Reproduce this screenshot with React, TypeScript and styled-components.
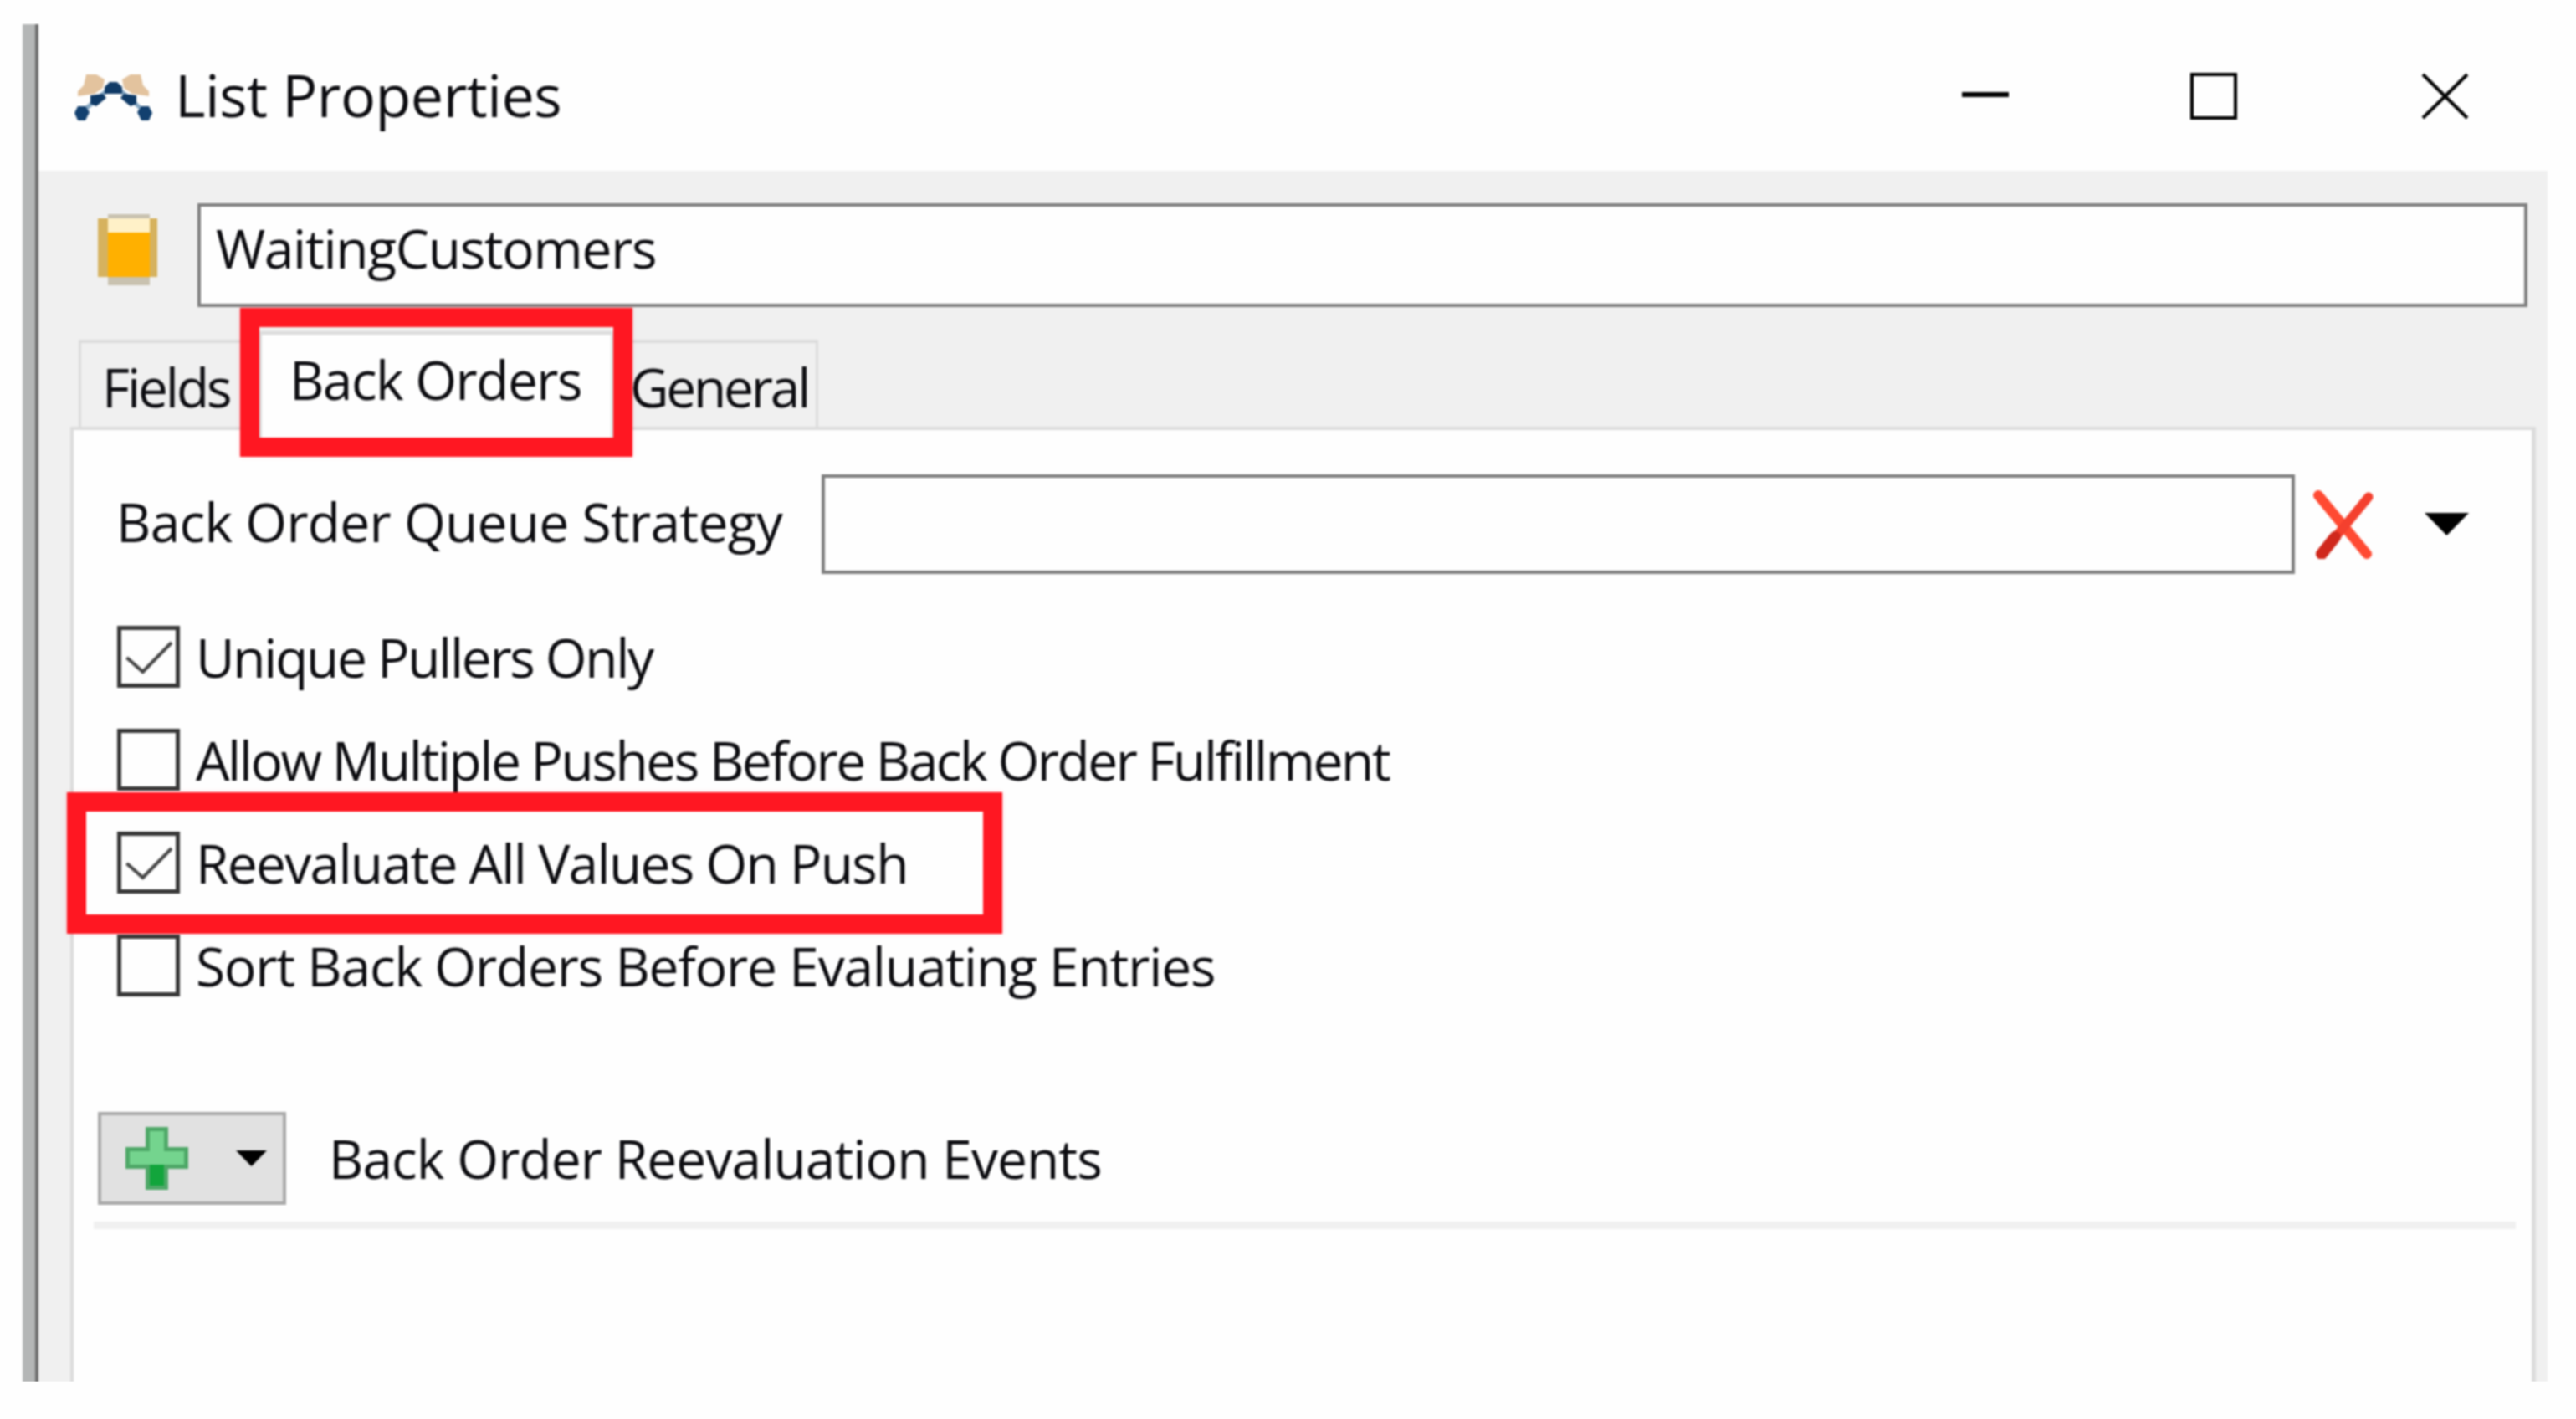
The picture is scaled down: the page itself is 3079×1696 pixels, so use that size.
import React from 'react';
import styled, { createGlobalStyle } from 'styled-components';

const CHECKS = [
  { label: 'Unique Pullers Only', checked: true, marked: false, tracking: -2.3 },
  { label: 'Allow Multiple Pushes Before Back Order Fulfillment', checked: false, marked: false, tracking: -2.45 },
  { label: 'Reevaluate All Values On Push', checked: true, marked: true, tracking: -1.7 },
  { label: 'Sort Back Orders Before Evaluating Entries', checked: false, marked: false, tracking: -1.17 },
];

const GlobalStyle = createGlobalStyle`
  html, body {
    margin: 0;
    background: #fefefe;
  }
  * {
    box-sizing: border-box;
  }
`;

const Frame = styled.div`
  width: 3018px;
  height: 1623px;
  margin: 29px 0 0 27px;
  border-left: 15px solid #b4b6b6;
  font-family: 'Open Sans', 'Noto Sans', sans-serif;
  color: #0c0c10;
  filter: blur(0.9px);
`;

const Window = styled.div`
  display: flex;
  flex-direction: column;
  height: 100%;
  border-left: 4px solid #6e6e6e;
`;

const TitleBar = styled.div`
  display: flex;
  align-items: center;
  flex: 0 0 175px;
  padding-left: 34px;
  background: #fefefe;
`;

const Title = styled.div`
  flex: 1;
  margin: -8px 0 0 19px;
  font-size: 70px;
  letter-spacing: -0.5px;
  line-height: 96px;
`;

const Controls = styled.div`
  display: flex;
  align-items: center;
  margin: -4px 94px 0 0;
`;

const MinimizeBar = styled.div`
  width: 56px;
  height: 6px;
  margin: -4px 217px 0 0;
  background: #000;
`;

const MaximizeBox = styled.div`
  width: 56px;
  height: 56px;
  margin-right: 220px;
  border: 4px solid #000;
`;

const CloseIcon = styled.svg`
  display: block;
  width: 57px;
  height: 56px;
`;

const Body = styled.div`
  display: flex;
  flex-direction: column;
  flex: 1;
  padding-top: 39px;
  background: #f0f0f0;
`;

const NameRow = styled.div`
  display: flex;
  align-items: center;
  height: 124px;
  padding: 0 24px 0 71px;
`;

const Barrel = styled.svg`
  display: block;
  flex: 0 0 71px;
  height: 85px;
  margin: 0 48px 14px 0;
`;

const NameInput = styled.div`
  flex: 1;
  height: 100%;
  padding-left: 18px;
  border: 4px solid #808080;
  background: #fefefe;
  font-size: 64px;
  letter-spacing: -1.3px;
  line-height: 100px;
`;

const TabStrip = styled.div`
  display: flex;
  align-items: flex-start;
  flex: none;
  height: 114px;
  margin-top: 29px;
  padding-left: 48px;
`;

const Tab = styled.div<{ $active?: boolean; $width: number; $pad: number; $tracking: number }>`
  position: relative;
  width: ${({ $width }) => $width}px;
  padding-left: ${({ $pad }) => $pad}px;
  font-size: 64px;
  letter-spacing: ${({ $tracking }) => $tracking}px;
  white-space: nowrap;
  border: solid #dcdcdc;
  border-width: 4px 3px 0;
  ${({ $active }) =>
    $active
      ? `
    z-index: 2;
    height: 127px;
    line-height: 108px;
    background: #fefefe;
  `
      : `
    height: 104px;
    margin-top: 10px;
    line-height: 105px;
    background: #f0f0f0;
  `}
`;

const Highlight = styled.div`
  position: absolute;
  z-index: 3;
  border: 23px solid #ff1722;
  box-shadow: 0 0 4px rgba(255, 40, 60, 0.3);
  pointer-events: none;
`;

const TabHighlight = styled(Highlight)`
  inset: -32px -26px -23px -26px;
`;

const RowHighlight = styled(Highlight)`
  top: -47px;
  bottom: -48px;
  left: -60px;
  width: 1118px;
`;

const Panel = styled.div`
  position: relative;
  flex: 1;
  margin: 0 14px 0 38px;
  padding-top: 53px;
  border: solid #dcdcdc;
  border-width: 4px 5px 0 4px;
  background: #fefefe;
`;

const StrategyRow = styled.div`
  display: flex;
  align-items: center;
  height: 119px;
  padding-left: 51px;
`;

const RowLabel = styled.div`
  flex: 0 0 843px;
  margin-top: -7px;
  font-size: 64px;
  letter-spacing: -0.7px;
  white-space: nowrap;
`;

const StrategyInput = styled.div`
  flex: 0 0 1761px;
  height: 100%;
  border: 4px solid #808080;
  background: #fefefe;
`;

const ClearIcon = styled.svg`
  display: block;
  width: 76px;
  height: 82px;
  margin-left: 20px;
`;

const Caret = styled.svg<{ $w: number; $h: number; $left: number }>`
  display: block;
  flex: none;
  width: ${({ $w }) => $w}px;
  height: ${({ $h }) => $h}px;
  margin-left: ${({ $left }) => $left}px;
`;

const CheckList = styled.div`
  display: flex;
  flex-direction: column;
  gap: 49px;
  margin-top: 62px;
  padding-left: 52px;
`;

const CheckRow = styled.div`
  position: relative;
  display: flex;
  align-items: center;
  height: 74px;
`;

const CheckBox = styled.div`
  flex: 0 0 75px;
  height: 74px;
  margin-right: 19px;
  border: 5px solid #383838;
  background: #fefefe;
`;

const CheckMark = styled.svg`
  display: block;
  width: 65px;
  height: 64px;
`;

const CheckLabel = styled.div<{ $tracking: number }>`
  margin-top: 1px;
  font-size: 64px;
  letter-spacing: ${({ $tracking }) => $tracking}px;
  line-height: 74px;
  white-space: nowrap;
`;

const EventRow = styled.div`
  display: flex;
  align-items: center;
  margin-top: 138px;
  padding-left: 29px;
`;

const AddButton = styled.div`
  display: flex;
  align-items: center;
  flex: 0 0 225px;
  height: 111px;
  padding-left: 29px;
  border: 4px solid #a9a9a9;
  background: #e1e1e1;
`;

const PlusIcon = styled.svg`
  display: block;
  width: 75px;
  height: 75px;
`;

const EventLabel = styled.div`
  margin-left: 51px;
  font-size: 64px;
  letter-spacing: -0.9px;
  white-space: nowrap;
`;

const Divider = styled.div`
  width: 2895px;
  height: 9px;
  margin: 20px 0 0 24px;
  background: #f0f0f0;
`;

const LogoIcon = styled.svg`
  display: block;
  flex: none;
  width: 110px;
  height: 80px;
`;

function Logo() {
  return (
    <LogoIcon viewBox="0 0 110 80">
      <path d="M23 12 H35 L45 18 L43 28 L33 35 L13 38 V32 L20 25 Z" fill="#e3c39e" />
      <path d="M88 12 H76 L66 18 L68 28 L78 35 L98 38 V32 L91 25 Z" fill="#e3c39e" />
      <path d="M12 62 L56 24 L99 62" fill="none" stroke="#86a8c4" strokeWidth="5" />
      <path d="M45 27 L51 21 H60 L66 27 V35 H45 Z" fill="#0f3a66" />
      <path d="M28 37 L43 35 L47 40 L35 50 L28 47 Z" fill="#0f3a66" />
      <path d="M83 37 L68 35 L64 40 L76 50 L83 47 Z" fill="#0f3a66" />
      <path d="M13 50 H22 L27 57 L22 67 H13 L9 58 Z" fill="#12406f" />
      <path d="M98 50 H89 L84 57 L89 67 H98 L102 58 Z" fill="#12406f" />
    </LogoIcon>
  );
}

function App() {
  return (
    <>
      <GlobalStyle />
      <Frame>
        <Window>
          <TitleBar>
            <Logo />
            <Title>List Properties</Title>
            <Controls>
              <MinimizeBar />
              <MaximizeBox />
              <CloseIcon viewBox="0 0 57 56">
                <path d="M2 2 L55 54 M55 2 L2 54" stroke="#000" strokeWidth="4" />
              </CloseIcon>
            </Controls>
          </TitleBar>
          <Body>
            <NameRow>
              <Barrel viewBox="0 0 71 85">
                <rect x="12" y="0" width="50" height="85" fill="#c9c2b0" />
                <rect x="0" y="5" width="71" height="70" fill="#d6b25e" />
                <rect x="12" y="5" width="50" height="17" fill="#fff1c8" />
                <rect x="12" y="22" width="50" height="53" fill="#ffb000" />
              </Barrel>
              <NameInput>WaitingCustomers</NameInput>
            </NameRow>
            <TabStrip>
              <Tab $width={216} $pad={25} $tracking={-3.1}>
                Fields
              </Tab>
              <Tab $active $width={423} $pad={33} $tracking={-1.5}>
                Back Orders
                <TabHighlight />
              </Tab>
              <Tab $width={245} $pad={17} $tracking={-3.2}>
                General
              </Tab>
            </TabStrip>
            <Panel>
              <StrategyRow>
                <RowLabel>Back Order Queue Strategy</RowLabel>
                <StrategyInput />
                <ClearIcon viewBox="0 0 76 82">
                  <path d="M8 6 L66 76" stroke="#ff4a32" strokeWidth="12" strokeLinecap="round" />
                  <path d="M68 8 L12 76" stroke="#f4402e" strokeWidth="11" strokeLinecap="round" />
                  <path d="M12 76 L28 56" stroke="#d0281c" strokeWidth="14" strokeLinecap="round" />
                </ClearIcon>
                <Caret $w={53} $h={27} $left={59} viewBox="0 0 53 27">
                  <path d="M0 0 H53 L26.5 27 Z" fill="#000" />
                </Caret>
              </StrategyRow>
              <CheckList>
                {CHECKS.map((item) => (
                  <CheckRow key={item.label}>
                    <CheckBox>
                      {item.checked && (
                        <CheckMark viewBox="0 0 65 64">
                          <path d="M6.5 33 L25.7 50 L60 15" fill="none" stroke="#444" strokeWidth="4" />
                        </CheckMark>
                      )}
                    </CheckBox>
                    <CheckLabel $tracking={item.tracking}>{item.label}</CheckLabel>
                    {item.marked && <RowHighlight />}
                  </CheckRow>
                ))}
              </CheckList>
              <EventRow>
                <AddButton>
                  <PlusIcon viewBox="0 0 75 75">
                    <path d="M24 0 H51 V24 H75 V50 H51 V75 H24 V50 H0 V24 H24 Z" fill="#4fa868" />
                    <path d="M29 5 H46 V29 H70 V45 H46 V70 H29 V45 H5 V29 H29 Z" fill="#74d48e" />
                    <path d="M29 45 H46 V70 H29 Z" fill="#12a53c" />
                  </PlusIcon>
                  <Caret $w={37} $h={19} $left={57} viewBox="0 0 37 19">
                    <path d="M0 0 H37 L18.5 19 Z" fill="#000" />
                  </Caret>
                </AddButton>
                <EventLabel>Back Order Reevaluation Events</EventLabel>
              </EventRow>
              <Divider />
            </Panel>
          </Body>
        </Window>
      </Frame>
    </>
  );
}

export default App;
